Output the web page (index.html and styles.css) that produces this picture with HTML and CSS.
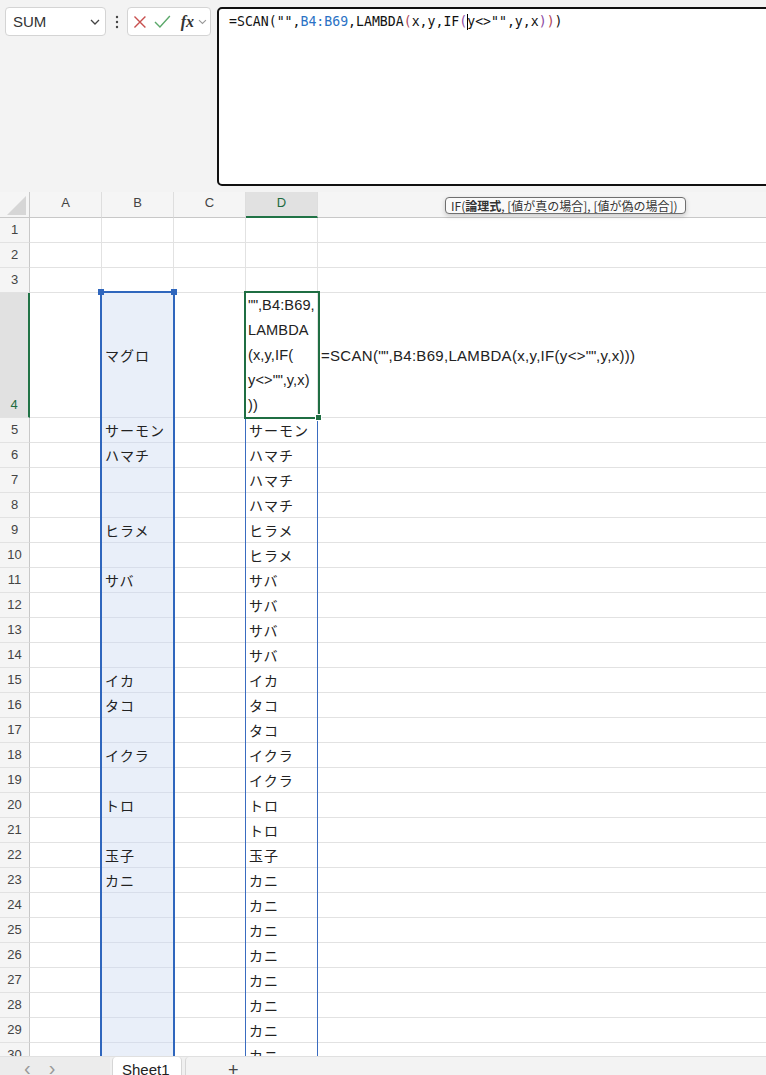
FILE: index.html
```html
<!DOCTYPE html>
<html lang="ja">
<head>
<meta charset="utf-8">
<title>Excel SCAN</title>
<link rel="stylesheet" href="styles.css">
</head>
<body>
<div class="top">
  <div class="namebox"><span>SUM</span>
    <svg class="chev" width="10" height="6" viewBox="0 0 10 6"><path d="M1 1 L5 5 L9 1" fill="none" stroke="#444" stroke-width="1.3"/></svg>
  </div>
  <div class="dots"><svg width="4" height="14" viewBox="0 0 4 14"><circle cx="2" cy="2" r="1.2" fill="#444"/><circle cx="2" cy="7" r="1.2" fill="#444"/><circle cx="2" cy="12" r="1.2" fill="#444"/></svg></div>
  <div class="fxbox">
    <svg width="14" height="14" viewBox="0 0 14 14"><path d="M1.5 1.5 L12.5 12.5 M12.5 1.5 L1.5 12.5" stroke="#c8504f" stroke-width="1.4" fill="none"/></svg>
    <svg width="17" height="13" viewBox="0 0 17 13"><path d="M1 7 L6 12 L16 1" stroke="#5ba86a" stroke-width="1.4" fill="none"/></svg>
    <span class="fx">fx</span>
    <svg class="chev2" width="9" height="6" viewBox="0 0 9 6"><path d="M1 1 L4.5 4.5 L8 1" fill="none" stroke="#999" stroke-width="1.1"/></svg>
  </div>
  <div class="formula">=SCAN("",<span class="ref">B4:B69</span>,LAMBDA<span class="p1">(</span>x,y,IF<span class="p2">(</span><span class="caret"></span>y&lt;&gt;"",y,x<span class="p2">)</span><span class="p1">)</span>)</div>
</div>

<div class="sheet">
  <div class="grid">
    <div class="corner"><svg width="20" height="19" viewBox="0 0 20 19"><polygon points="19,0 19,19 0,19" fill="#d6d6d6"/></svg></div>
    <div class="ch">A</div><div class="ch">B</div><div class="ch">C</div><div class="ch hl">D</div><div class="ch last"></div>

    <div class="rh">1</div><div class="c"></div><div class="c"></div><div class="c"></div><div class="c"></div><div class="c e"></div>
    <div class="rh">2</div><div class="c"></div><div class="c"></div><div class="c"></div><div class="c"></div><div class="c e"></div>
    <div class="rh">3</div><div class="c"></div><div class="c"></div><div class="c"></div><div class="c"></div><div class="c e"></div>

    <div class="rh hl">4</div><div class="c"></div><div class="c sel">マグロ</div><div class="c"></div>
    <div class="c d4"><span class="q">""</span>,B4:B69,<br>LAMBDA<br>(x,y,IF(<br>y&lt;&gt;<span class="q">""</span>,y,x)<br>))</div>
    <div class="c e txt">=SCAN(<span class="q">""</span>,B4:B69,LAMBDA(x,y,IF(y&lt;&gt;<span class="q">""</span>,y,x)))</div>

    <div class="rh">5</div><div class="c"></div><div class="c sel">サーモン</div><div class="c"></div><div class="c">サーモン</div><div class="c e"></div>
    <div class="rh">6</div><div class="c"></div><div class="c sel">ハマチ</div><div class="c"></div><div class="c">ハマチ</div><div class="c e"></div>
    <div class="rh">7</div><div class="c"></div><div class="c sel"></div><div class="c"></div><div class="c">ハマチ</div><div class="c e"></div>
    <div class="rh">8</div><div class="c"></div><div class="c sel"></div><div class="c"></div><div class="c">ハマチ</div><div class="c e"></div>
    <div class="rh">9</div><div class="c"></div><div class="c sel">ヒラメ</div><div class="c"></div><div class="c">ヒラメ</div><div class="c e"></div>
    <div class="rh">10</div><div class="c"></div><div class="c sel"></div><div class="c"></div><div class="c">ヒラメ</div><div class="c e"></div>
    <div class="rh">11</div><div class="c"></div><div class="c sel">サバ</div><div class="c"></div><div class="c">サバ</div><div class="c e"></div>
    <div class="rh">12</div><div class="c"></div><div class="c sel"></div><div class="c"></div><div class="c">サバ</div><div class="c e"></div>
    <div class="rh">13</div><div class="c"></div><div class="c sel"></div><div class="c"></div><div class="c">サバ</div><div class="c e"></div>
    <div class="rh">14</div><div class="c"></div><div class="c sel"></div><div class="c"></div><div class="c">サバ</div><div class="c e"></div>
    <div class="rh">15</div><div class="c"></div><div class="c sel">イカ</div><div class="c"></div><div class="c">イカ</div><div class="c e"></div>
    <div class="rh">16</div><div class="c"></div><div class="c sel">タコ</div><div class="c"></div><div class="c">タコ</div><div class="c e"></div>
    <div class="rh">17</div><div class="c"></div><div class="c sel"></div><div class="c"></div><div class="c">タコ</div><div class="c e"></div>
    <div class="rh">18</div><div class="c"></div><div class="c sel">イクラ</div><div class="c"></div><div class="c">イクラ</div><div class="c e"></div>
    <div class="rh">19</div><div class="c"></div><div class="c sel"></div><div class="c"></div><div class="c">イクラ</div><div class="c e"></div>
    <div class="rh">20</div><div class="c"></div><div class="c sel">トロ</div><div class="c"></div><div class="c">トロ</div><div class="c e"></div>
    <div class="rh">21</div><div class="c"></div><div class="c sel"></div><div class="c"></div><div class="c">トロ</div><div class="c e"></div>
    <div class="rh">22</div><div class="c"></div><div class="c sel">玉子</div><div class="c"></div><div class="c">玉子</div><div class="c e"></div>
    <div class="rh">23</div><div class="c"></div><div class="c sel">カニ</div><div class="c"></div><div class="c">カニ</div><div class="c e"></div>
    <div class="rh">24</div><div class="c"></div><div class="c sel"></div><div class="c"></div><div class="c">カニ</div><div class="c e"></div>
    <div class="rh">25</div><div class="c"></div><div class="c sel"></div><div class="c"></div><div class="c">カニ</div><div class="c e"></div>
    <div class="rh">26</div><div class="c"></div><div class="c sel"></div><div class="c"></div><div class="c">カニ</div><div class="c e"></div>
    <div class="rh">27</div><div class="c"></div><div class="c sel"></div><div class="c"></div><div class="c">カニ</div><div class="c e"></div>
    <div class="rh">28</div><div class="c"></div><div class="c sel"></div><div class="c"></div><div class="c">カニ</div><div class="c e"></div>
    <div class="rh">29</div><div class="c"></div><div class="c sel"></div><div class="c"></div><div class="c">カニ</div><div class="c e"></div>
    <div class="rh">30</div><div class="c"></div><div class="c sel"></div><div class="c"></div><div class="c">カニ</div><div class="c e"></div>
  </div>

  <div class="refbox"></div>
  <div class="handle h1"></div>
  <div class="handle h2"></div>
  <div class="spill"></div>
  <div class="active"></div>
  <div class="fill-handle"></div>
  <div class="tip">IF(<b>論理式</b>, [値が真の場合], [値が偽の場合])</div>
</div>

<div class="tabs">
  <div class="nav"><span>&lsaquo;</span><span>&rsaquo;</span></div>
  <div class="tab">Sheet1</div>
  <div class="rest"><span class="plus">+</span></div>
</div>
</body>
</html>
```

FILE: styles.css
```css
* { box-sizing: border-box; }
html, body { margin: 0; padding: 0; }
body {
  width: 766px;
  height: 1075px;
  overflow: hidden;
  background: #ffffff;
  font-family: "Liberation Sans", "Noto Sans CJK JP", sans-serif;
  color: #222;
}

/* ---------- top formula area ---------- */
.top {
  height: 192px;
  background: #f3f3f3;
  display: flex;
  align-items: flex-start;
  padding: 7px 0 0 5px;
  overflow: hidden;
}
.top > * { flex: none; }
.namebox {
  width: 101px;
  height: 29px;
  background: #fff;
  border: 1px solid #d4d4d4;
  border-radius: 4px;
  display: flex;
  align-items: center;
  justify-content: space-between;
  padding: 0 5px 0 7px;
  font-size: 15px;
  color: #333;
}
.dots {
  width: 21px;
  height: 29px;
  display: flex;
  align-items: center;
  justify-content: center;
}
.fxbox {
  width: 84px;
  height: 29px;
  background: #fff;
  border: 1px solid #d4d4d4;
  border-radius: 4px;
  display: flex;
  align-items: center;
  padding: 0 3px 0 5px;
  gap: 7px;
}
.fx {
  font-family: "Liberation Serif", "DejaVu Serif", serif;
  font-style: italic;
  font-weight: bold;
  font-size: 16px;
  color: #333;
  margin-left: 3px;
}
.chev2 { margin-left: -3px; }
.formula {
  margin-left: 6px;
  width: 560px;
  height: 179px;
  background: #fff;
  border: 2px solid #111;
  border-radius: 5px;
  padding: 4px 0 0 10px;
  font-family: "DejaVu Sans Mono", "Liberation Mono", monospace;
  font-size: 13.2px;
  line-height: 17px;
  color: #111;
  white-space: nowrap;
}
.ref { color: #2a72c5; }
.p1 { color: #b0475a; }
.p2 { color: #8b4aa3; }
.caret {
  display: inline-block;
  width: 1px;
  height: 16px;
  background: #000;
  vertical-align: -4px;
  margin-right: -1px;
}

/* ---------- sheet ---------- */
.sheet {
  position: relative;
  height: 864px;
  overflow: hidden;
  background: #fff;
}
.grid {
  display: grid;
  grid-template-columns: 30px 72px 72px 72px 72px 1fr;
  grid-template-rows: 26px 25px 25px 25px 125px;
  grid-auto-rows: 25px;
}
.corner {
  background: #f5f5f5;
  border-right: 1px solid #c8c8c8;
  border-bottom: 1px solid #c8c8c8;
  display: flex;
  align-items: flex-end;
  justify-content: flex-end;
  padding: 0 2px 2px 0;
}
.ch {
  background: #f5f5f5;
  border-right: 1px solid #dedede;
  border-bottom: 1px solid #c8c8c8;
  display: flex;
  align-items: center;
  justify-content: center;
  font-size: 13px;
  color: #444;
  padding-bottom: 4px;
}
.ch.last { border-right: none; }
.ch.hl {
  background: #e1e1e1;
  color: #1e6b40;
  border-bottom: 2px solid #217346;
}
.rh {
  background: #f5f5f5;
  border-right: 1px solid #c8c8c8;
  border-bottom: 1px solid #e2e2e2;
  display: flex;
  align-items: flex-end;
  justify-content: center;
  font-size: 13px;
  line-height: 24px;
  color: #444;
}
.rh.hl {
  background: #e1e1e1;
  color: #1e6b40;
  border-right: 2px solid #217346;
}
.c {
  border-right: 1px solid #e2e2e2;
  border-bottom: 1px solid #e2e2e2;
  display: flex;
  align-items: center;
  padding-left: 3px;
  font-family: "Noto Sans CJK JP", sans-serif;
  font-size: 14px;
  letter-spacing: 1px;
  color: #222;
  white-space: nowrap;
}
.c.e { border-right: none; }
.c.sel { background: #e9eff9; border-bottom-color: #d8deea; }
.c.d4 {
  display: block;
  font-family: "Liberation Sans", sans-serif;
  letter-spacing: 0.1px;
  line-height: 25px;
  font-size: 14.6px;
  padding-left: 2px;
  overflow: visible;
}
.c.txt {
  font-family: "Liberation Sans", sans-serif;
  letter-spacing: 0.3px;
  font-size: 15px;
  overflow: visible;
}
.q { letter-spacing: -0.2px; }

/* overlays */
.refbox {
  position: absolute;
  left: 100px;
  top: 99px;
  width: 75px;
  height: 800px;
  border: 2px solid #2f66bd;
}
.handle {
  position: absolute;
  top: 97px;
  width: 6px;
  height: 6px;
  background: #2f66bd;
}
.h1 { left: 98px; }
.h2 { left: 171px; }
.spill {
  position: absolute;
  left: 245px;
  top: 226px;
  width: 73px;
  height: 700px;
  border-left: 1px solid #3a6cc0;
  border-right: 1px solid #3a6cc0;
}
.active {
  position: absolute;
  left: 244px;
  top: 99px;
  width: 76px;
  height: 128px;
  border: 2px solid #1f6e43;
}
.fill-handle {
  position: absolute;
  left: 316px;
  top: 223px;
  width: 5px;
  height: 5px;
  background: #1f6e43;
  outline: 1px solid #fff;
}
.tip {
  position: absolute;
  left: 445px;
  top: 5px;
  height: 17px;
  padding: 0 7px 0 5px;
  border: 1px solid #6f6f6f;
  border-radius: 4px;
  background: #fafafa;
  box-shadow: 0 2px 5px rgba(0,0,0,0.18);
  font-family: "Noto Sans CJK JP", sans-serif;
  font-size: 12px;
  line-height: 15px;
  color: #333;
  white-space: nowrap;
}
.tip b { font-weight: 700; }

/* ---------- sheet tabs ---------- */
.tabs {
  height: 19px;
  display: flex;
  background: #f0f0f0;
  border-top: 1px solid #e0e0e0;
  font-size: 14px;
  overflow: hidden;
}
.nav {
  width: 110px;
  display: flex;
  gap: 18px;
  padding: 0 0 0 24px;
  color: #999;
  font-size: 20px;
  line-height: 22px;
  background: #ececec;
}
.tab {
  width: 70px;
  margin-left: 2px;
  background: #fff;
  border-left: 1px solid #d6d6d6;
  border-right: 1px solid #d6d6d6;
  border-radius: 4px 4px 0 0;
  padding: 4px 0 0 9px;
  color: #222;
  font-family: "Liberation Sans", sans-serif;
  font-size: 15px;
}
.rest {
  flex: 1;
  margin-left: 3px;
  border-left: 1px solid #d6d6d6;
  background: #f3f3f3;
  border-radius: 4px 0 0 0;
  padding-left: 42px;
}
.plus {
  font-size: 18px;
  color: #444;
  line-height: 26px;
}
```
